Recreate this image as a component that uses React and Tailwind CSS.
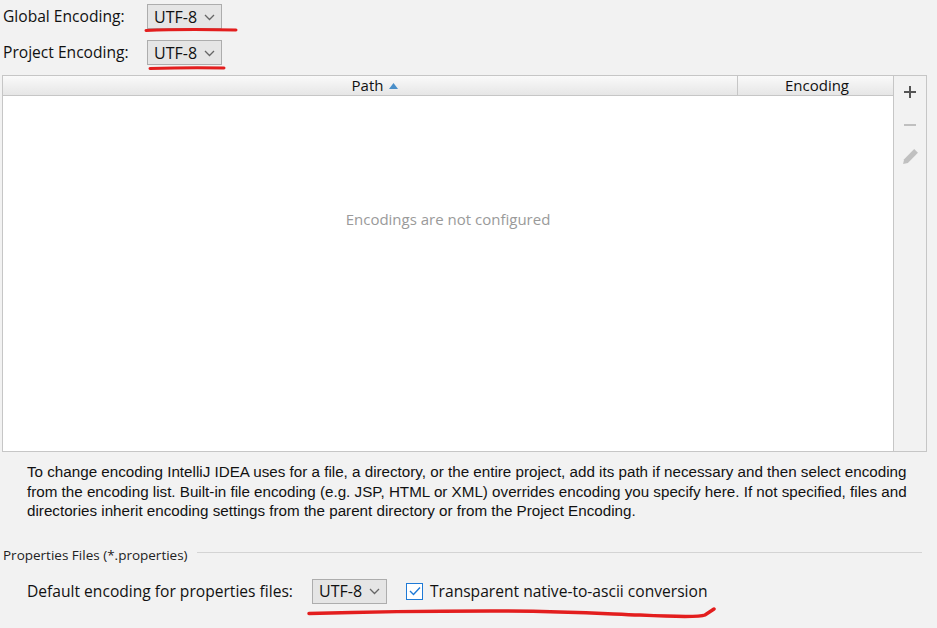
import React from "react";

const font = { fontFamily: '"Open Sans", "Noto Sans", sans-serif' };

function Combo() {
  return (
    <div className="flex items-center h-[25px] w-[75px] border border-[#adadad] bg-[#e5e5e5] pl-[6px] pr-[6px] justify-between">
      <span className="text-[16px] text-[#111]">UTF-8</span>
      <svg width="11" height="7" viewBox="0 0 11 7" className="mt-[1px]">
        <path d="M1 1 L5.5 5.5 L10 1" fill="none" stroke="#666" strokeWidth="1.3" />
      </svg>
    </div>
  );
}

export default function App() {
  return (
    <div
      className="relative w-[937px] h-[628px] bg-[#f2f2f2] overflow-hidden text-[#111]"
      style={font}
    >
      {/* Encoding rows */}
      <div className="flex items-center pt-[4px] pl-[3px]">
        <span className="w-[144px] text-[15.6px]">Global Encoding:</span>
        <Combo />
      </div>
      <div className="flex items-center mt-[11px] pl-[3px]">
        <span className="w-[144px] text-[15.6px]">Project Encoding:</span>
        <Combo />
      </div>

      {/* Table + toolbar */}
      <div className="flex mt-[10px] ml-[2px] h-[377px]">
        <div className="w-[892px] flex flex-col border border-[#c6c6c6] bg-white">
          <div className="flex h-[20px] border-b border-[#c6c6c6] bg-gradient-to-b from-[#fafafa] to-[#e6e6e6] text-[15px]">
            <div className="w-[735px] flex items-center justify-center border-r border-[#c6c6c6] gap-[6px] pl-[10px]">
              <span>Path</span>
              <svg width="9" height="6" viewBox="0 0 9 6">
                <path d="M0 6 L4.5 0 L9 6 Z" fill="#4a8fc9" />
              </svg>
            </div>
            <div className="flex-1 flex items-center justify-center pl-[3px]">Encoding</div>
          </div>
          <div className="flex-1 flex items-start justify-center pt-[112px]">
            <span className="text-[15px] text-[#9a9a9a]">Encodings are not configured</span>
          </div>
        </div>
        <div className="w-[33px] border-t border-r border-b border-[#c6c6c6] flex flex-col items-center pt-[9px] gap-[19px]">
          <svg width="14" height="14" viewBox="0 0 14 14">
            <path d="M7 1 V13 M1 7 H13" stroke="#555" strokeWidth="2" />
          </svg>
          <svg width="14" height="14" viewBox="0 0 14 14">
            <path d="M1 7 H13" stroke="#c0c0c0" strokeWidth="2" />
          </svg>
          <svg width="17" height="17" viewBox="0 0 16 16" className="-mt-[3px]">
            <path d="M11.5 1 L15 4.5 L5.5 14 L1 15 L2 10.5 Z" fill="#c0c0c0" />
          </svg>
        </div>
      </div>

      {/* Help text */}
      <div
        className="mt-[10px] ml-[27px] text-[15.2px] leading-[19.5px] text-[#111]"
        style={{ fontFamily: '"Liberation Sans", Arial, sans-serif' }}
      >
        <div className="whitespace-nowrap">
          To change encoding IntelliJ IDEA uses for a file, a directory, or the entire project, add its path if necessary and then select encoding
        </div>
        <div className="whitespace-nowrap">
          from the encoding list. Built-in file encoding (e.g. JSP, HTML or XML) overrides encoding you specify here. If not specified, files and
        </div>
        <div className="whitespace-nowrap">
          directories inherit encoding settings from the parent directory or from the Project Encoding.
        </div>
      </div>

      {/* Properties files */}
      <div className="flex items-center mt-[24px] pl-[3px] pr-[15px]">
        <span className="text-[13.5px] text-[#222]">Properties Files (*.properties)</span>
        <div className="flex-1 h-px bg-[#d4d4d4] ml-[9px] -mt-[5px]" />
      </div>
      <div className="flex items-center mt-[14px] pl-[27px]">
        <span className="w-[285px] text-[15.6px]">Default encoding for properties files:</span>
        <Combo />
        <div className="flex items-center ml-[19px] gap-[7px]">
          <div className="w-[17px] h-[17px] border border-[#1f7ad6] bg-white flex items-center justify-center">
            <svg width="12" height="10" viewBox="0 0 12 10">
              <path d="M1 5 L4.5 8.5 L11 1.5" fill="none" stroke="#1f7ad6" strokeWidth="1.4" />
            </svg>
          </div>
          <span className="text-[15.6px]">Transparent native-to-ascii conversion</span>
        </div>
      </div>

      {/* Red annotation strokes */}
      <svg className="absolute left-0 top-0 pointer-events-none" width="937" height="628">
        <path d="M146 30.5 C180 29 210 29.5 236 30" fill="none" stroke="#e31e1e" strokeWidth="3" strokeLinecap="round" />
        <path d="M150 68.5 C180 67.5 205 67.5 224 68" fill="none" stroke="#e31e1e" strokeWidth="3" strokeLinecap="round" />
        <path d="M309 613.5 C360 612 420 611 490 611 C560 611 590 613 640 615 C680 617 700 617 705 615 L714 609" fill="none" stroke="#e31e1e" strokeWidth="3.5" strokeLinecap="round" />
      </svg>
    </div>
  );
}
